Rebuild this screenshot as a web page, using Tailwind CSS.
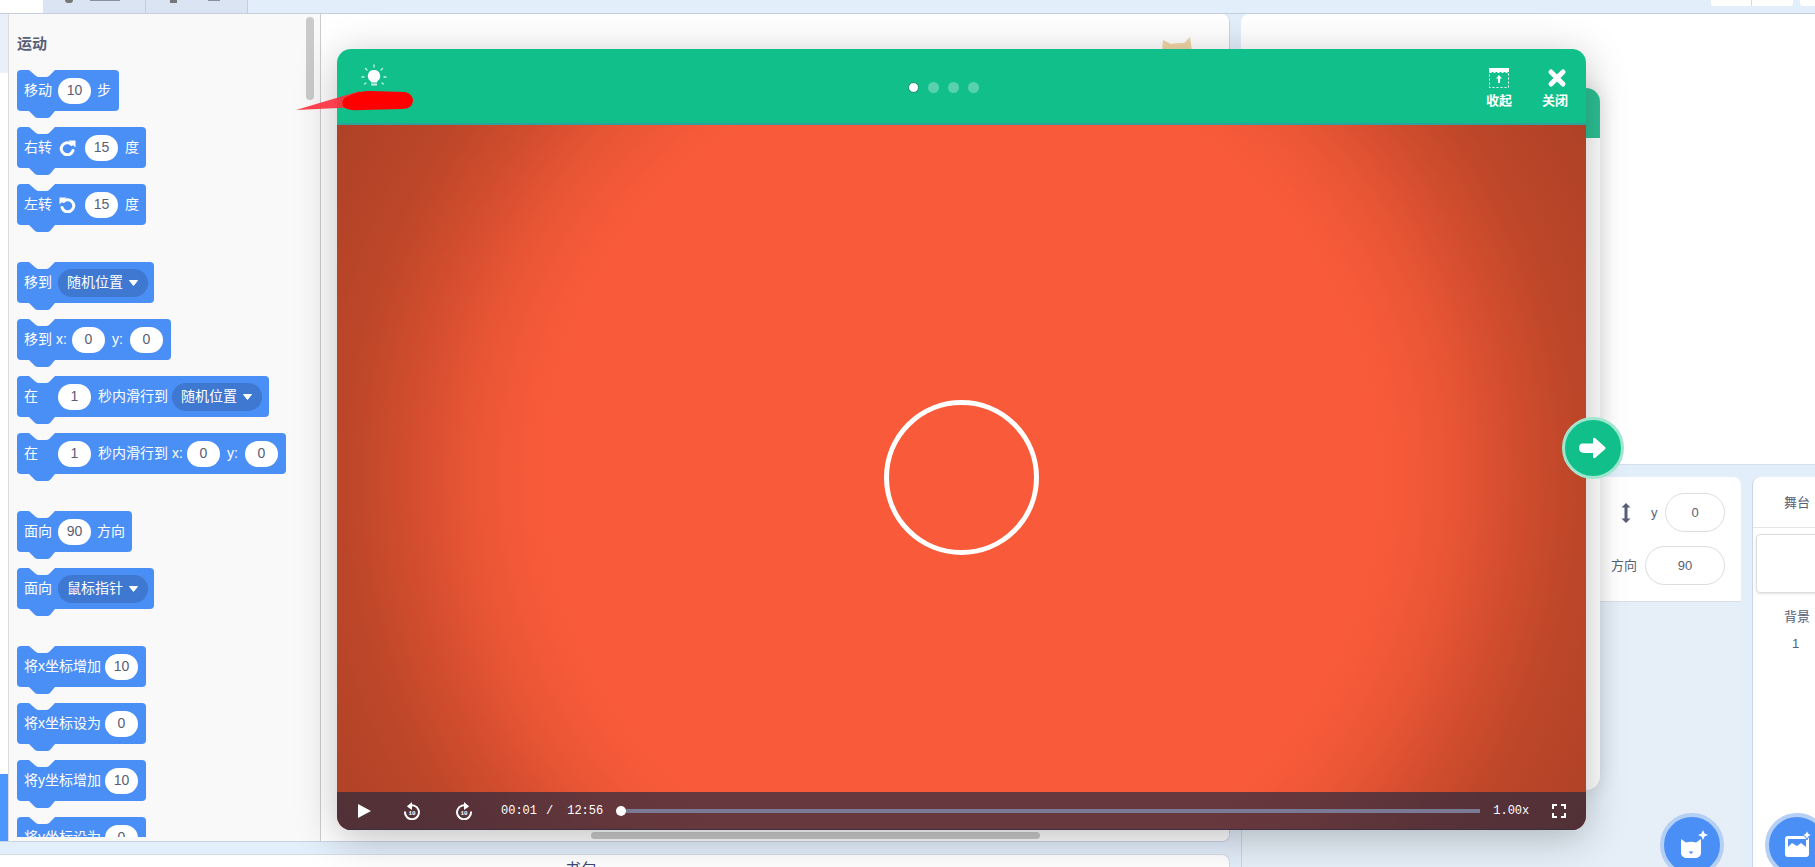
<!DOCTYPE html>
<html lang="en">
<head>
    <meta charset="UTF-8">
    <title>Scratch</title>
    <script src="https://cdn.jsdelivr.net/npm/@tailwindcss/browser@4"></script>
</head>
<body class="relative h-[867px] overflow-hidden bg-[#e3eefb] font-['Liberation_Sans','Noto_Sans_CJK_SC',sans-serif] text-[#575e75]">
    <!-- shared block notches and turn icon -->
    <svg class="hidden">
        <symbol id="notchTop" viewBox="0 0 26 7"><path d="M0 0 L7 6 Q8 7 10 7 H17 Q19 7 20 6 L26 0 Z" fill="#f9f9f9"/></symbol>
        <symbol id="notchBottom" viewBox="0 0 26 7"><path d="M0 0 L6 6 Q7 7 9 7 H18 Q20 7 21 6 L26 0 Z" fill="#4a8ff5"/></symbol>
        <symbol id="turn" viewBox="0 0 17 17"><path d="M12.500 5.500A6 6 0 1 0 14 11.500" fill="none" stroke="white" stroke-width="3" stroke-linecap="round"/><path d="M9.500 1.500h7V8.500z" fill="white"/></symbol>
    </svg>

    <!-- top bar -->
    <div class="flex h-[14px] justify-between overflow-hidden border-b border-[#c5cedb]">
        <div class="flex">
            <div class="w-[43px] bg-white"></div>
            <div class="flex h-[13px] w-[103px] items-start border-r border-[#c5cedb] bg-[#dbe4f3] pl-[22px]">
                <span class="h-[3px] w-[8px] rounded-b-full bg-[#777]"></span>
                <span class="ml-[17px] h-[1px] w-[30px] bg-[#8a8f9c]"></span>
            </div>
            <div class="flex h-[13px] w-[102px] items-start border-r border-[#c5cedb] bg-[#dbe4f3] pl-[24px]">
                <span class="h-[3px] w-[7px] bg-[#777]"></span>
                <span class="ml-[31px] h-[1px] w-[12px] bg-[#8a8f9c]"></span>
            </div>
        </div>
        <div class="flex h-[6px]">
            <div class="h-[6px] w-[41px] rounded-bl-[3px] border-r border-[#d5dbe5] bg-white"></div>
            <div class="h-[6px] w-[41px] rounded-br-[3px] bg-white"></div>
            <div class="ml-[7px] h-[6px] w-[15px] rounded-bl-[3px] bg-white"></div>
        </div>
    </div>

    <div class="flex h-[853px]">
        <!-- left column -->
        <div class="flex w-[1230px] shrink-0 flex-col">
            <div class="flex h-[828px] shrink-0 overflow-hidden rounded-tr-[8px] rounded-br-[8px] border-r border-b border-[#c9d3e4] bg-white">
                <!-- category strip -->
                <div class="flex w-[9px] shrink-0 flex-col justify-between border-r border-[#ddd] bg-white">
                    <div class="h-[59px] bg-[#e9f0fa]"></div>
                    <div class="h-[67px] bg-[#4c97ff]"></div>
                </div>
                <!-- block palette -->
                <div class="relative w-[311px] shrink-0 overflow-hidden bg-[#f9f9f9] pl-[8px] pt-[20px]">
                    <div class="mb-[17px] text-[15px] leading-[19px] font-bold">运动</div>

                    <div class="relative mb-[16px] flex h-[41px] w-[102px] items-center gap-[6px] rounded-[4px] bg-[#4a8ff5] pl-[7px] text-[14px] text-white">
                        <svg class="absolute left-[12px] top-0 h-[7px] w-[26px]"><use href="#notchTop"/></svg>
                        <svg class="absolute left-[12px] top-[41px] h-[7px] w-[26px]"><use href="#notchBottom"/></svg>
                        <span>移动</span><span class="flex h-[26px] w-[33px] items-center justify-center rounded-full bg-white text-[#575e75]">10</span><span>步</span>
                    </div>
                    <div class="relative mb-[16px] flex h-[41px] w-[129px] items-center rounded-[4px] bg-[#4a8ff5] pl-[7px] text-[14px] text-white">
                        <svg class="absolute left-[12px] top-0 h-[7px] w-[26px]"><use href="#notchTop"/></svg>
                        <svg class="absolute left-[12px] top-[41px] h-[7px] w-[26px]"><use href="#notchBottom"/></svg>
                        <span>右转</span>
                        <svg class="ml-[7px] mr-[9px] size-[17px]"><use href="#turn"/></svg>
                        <span class="flex h-[26px] w-[33px] items-center justify-center rounded-full bg-white text-[#575e75]">15</span><span class="ml-[7px]">度</span>
                    </div>
                    <div class="relative mb-[37px] flex h-[41px] w-[129px] items-center rounded-[4px] bg-[#4a8ff5] pl-[7px] text-[14px] text-white">
                        <svg class="absolute left-[12px] top-0 h-[7px] w-[26px]"><use href="#notchTop"/></svg>
                        <svg class="absolute left-[12px] top-[41px] h-[7px] w-[26px]"><use href="#notchBottom"/></svg>
                        <span>左转</span>
                        <svg class="ml-[7px] mr-[9px] size-[17px] -scale-x-100"><use href="#turn"/></svg>
                        <span class="flex h-[26px] w-[33px] items-center justify-center rounded-full bg-white text-[#575e75]">15</span><span class="ml-[7px]">度</span>
                    </div>

                    <div class="relative mb-[16px] flex h-[41px] w-[137px] items-center gap-[6px] rounded-[4px] bg-[#4a8ff5] pl-[7px] text-[14px] text-white">
                        <svg class="absolute left-[12px] top-0 h-[7px] w-[26px]"><use href="#notchTop"/></svg>
                        <svg class="absolute left-[12px] top-[41px] h-[7px] w-[26px]"><use href="#notchBottom"/></svg>
                        <span>移到</span>
                        <span class="flex h-[28px] w-[90px] items-center rounded-full bg-[#3e78d0] pl-[9px]">随机位置<svg class="ml-[6px] h-[6px] w-[9px]" viewBox="0 0 9 6"><path d="M0.500 0.500h8L4.500 5.500z" fill="white" stroke="white" stroke-linejoin="round"/></svg></span>
                    </div>
                    <div class="relative mb-[16px] flex h-[41px] w-[154px] items-center rounded-[4px] bg-[#4a8ff5] pl-[7px] text-[14px] text-white">
                        <svg class="absolute left-[12px] top-0 h-[7px] w-[26px]"><use href="#notchTop"/></svg>
                        <svg class="absolute left-[12px] top-[41px] h-[7px] w-[26px]"><use href="#notchBottom"/></svg>
                        <span class="w-[48px]">移到 x:</span><span class="flex h-[26px] w-[33px] items-center justify-center rounded-full bg-white text-[#575e75]">0</span><span class="ml-[7px] w-[18px]">y:</span><span class="flex h-[26px] w-[33px] items-center justify-center rounded-full bg-white text-[#575e75]">0</span>
                    </div>
                    <div class="relative mb-[16px] flex h-[41px] w-[252px] items-center rounded-[4px] bg-[#4a8ff5] pl-[7px] text-[14px] text-white">
                        <svg class="absolute left-[12px] top-0 h-[7px] w-[26px]"><use href="#notchTop"/></svg>
                        <svg class="absolute left-[12px] top-[41px] h-[7px] w-[26px]"><use href="#notchBottom"/></svg>
                        <span class="w-[34px]">在</span><span class="flex h-[26px] w-[33px] items-center justify-center rounded-full bg-white text-[#575e75]">1</span><span class="ml-[7px] w-[74px]">秒内滑行到</span>
                        <span class="flex h-[28px] w-[90px] items-center rounded-full bg-[#3e78d0] pl-[9px]">随机位置<svg class="ml-[6px] h-[6px] w-[9px]" viewBox="0 0 9 6"><path d="M0.500 0.500h8L4.500 5.500z" fill="white" stroke="white" stroke-linejoin="round"/></svg></span>
                    </div>
                    <div class="relative mb-[37px] flex h-[41px] w-[269px] items-center rounded-[4px] bg-[#4a8ff5] pl-[7px] text-[14px] text-white">
                        <svg class="absolute left-[12px] top-0 h-[7px] w-[26px]"><use href="#notchTop"/></svg>
                        <svg class="absolute left-[12px] top-[41px] h-[7px] w-[26px]"><use href="#notchBottom"/></svg>
                        <span class="w-[34px]">在</span><span class="flex h-[26px] w-[33px] items-center justify-center rounded-full bg-white text-[#575e75]">1</span><span class="ml-[7px] w-[89px] whitespace-nowrap">秒内滑行到 x:</span><span class="flex h-[26px] w-[33px] items-center justify-center rounded-full bg-white text-[#575e75]">0</span><span class="ml-[7px] w-[18px]">y:</span><span class="flex h-[26px] w-[33px] items-center justify-center rounded-full bg-white text-[#575e75]">0</span>
                    </div>

                    <div class="relative mb-[16px] flex h-[41px] w-[115px] items-center gap-[6px] rounded-[4px] bg-[#4a8ff5] pl-[7px] text-[14px] text-white">
                        <svg class="absolute left-[12px] top-0 h-[7px] w-[26px]"><use href="#notchTop"/></svg>
                        <svg class="absolute left-[12px] top-[41px] h-[7px] w-[26px]"><use href="#notchBottom"/></svg>
                        <span>面向</span><span class="flex h-[26px] w-[33px] items-center justify-center rounded-full bg-white text-[#575e75]">90</span><span>方向</span>
                    </div>
                    <div class="relative mb-[37px] flex h-[41px] w-[137px] items-center gap-[6px] rounded-[4px] bg-[#4a8ff5] pl-[7px] text-[14px] text-white">
                        <svg class="absolute left-[12px] top-0 h-[7px] w-[26px]"><use href="#notchTop"/></svg>
                        <svg class="absolute left-[12px] top-[41px] h-[7px] w-[26px]"><use href="#notchBottom"/></svg>
                        <span>面向</span>
                        <span class="flex h-[28px] w-[90px] items-center rounded-full bg-[#3e78d0] pl-[9px]">鼠标指针<svg class="ml-[6px] h-[6px] w-[9px]" viewBox="0 0 9 6"><path d="M0.500 0.500h8L4.500 5.500z" fill="white" stroke="white" stroke-linejoin="round"/></svg></span>
                    </div>

                    <div class="relative mb-[16px] flex h-[41px] w-[129px] items-center gap-[6px] rounded-[4px] bg-[#4a8ff5] pl-[7px] text-[14px] text-white">
                        <svg class="absolute left-[12px] top-0 h-[7px] w-[26px]"><use href="#notchTop"/></svg>
                        <svg class="absolute left-[12px] top-[41px] h-[7px] w-[26px]"><use href="#notchBottom"/></svg>
                        <span class="w-[75px] whitespace-nowrap">将x坐标增加</span><span class="flex h-[26px] w-[33px] items-center justify-center rounded-full bg-white text-[#575e75]">10</span>
                    </div>
                    <div class="relative mb-[16px] flex h-[41px] w-[129px] items-center gap-[6px] rounded-[4px] bg-[#4a8ff5] pl-[7px] text-[14px] text-white">
                        <svg class="absolute left-[12px] top-0 h-[7px] w-[26px]"><use href="#notchTop"/></svg>
                        <svg class="absolute left-[12px] top-[41px] h-[7px] w-[26px]"><use href="#notchBottom"/></svg>
                        <span class="w-[75px] whitespace-nowrap">将x坐标设为</span><span class="flex h-[26px] w-[33px] items-center justify-center rounded-full bg-white text-[#575e75]">0</span>
                    </div>
                    <div class="relative mb-[16px] flex h-[41px] w-[129px] items-center gap-[6px] rounded-[4px] bg-[#4a8ff5] pl-[7px] text-[14px] text-white">
                        <svg class="absolute left-[12px] top-0 h-[7px] w-[26px]"><use href="#notchTop"/></svg>
                        <svg class="absolute left-[12px] top-[41px] h-[7px] w-[26px]"><use href="#notchBottom"/></svg>
                        <span class="w-[75px] whitespace-nowrap">将y坐标增加</span><span class="flex h-[26px] w-[33px] items-center justify-center rounded-full bg-white text-[#575e75]">10</span>
                    </div>
                    <div class="relative flex h-[41px] w-[129px] items-center gap-[6px] rounded-[4px] bg-[#4a8ff5] pl-[7px] text-[14px] text-white">
                        <svg class="absolute left-[12px] top-0 h-[7px] w-[26px]"><use href="#notchTop"/></svg>
                        <span class="w-[75px] whitespace-nowrap">将y坐标设为</span><span class="flex h-[26px] w-[33px] items-center justify-center rounded-full bg-white text-[#575e75]">0</span>
                    </div>

                    <!-- palette scrollbar and bottom strip -->
                    <div class="absolute left-[297px] top-[3px] h-[83px] w-[8px] rounded-full bg-[#cacaca]"></div>
                    <div class="absolute bottom-0 left-0 h-[4px] w-full bg-[#f9f9f9]"></div>
                </div>
                <!-- workspace -->
                <div class="relative flex-1 border-l border-[#ccc] bg-white">
                    <svg class="absolute left-[841px] top-[23px] h-[14px] w-[30px]" viewBox="0 0 30 14"><path d="M1 3l8 4c4-1 8-1 13-1l6-6 2 14H0z" fill="#f0d5a5"/></svg>
                    <div class="absolute bottom-[2px] left-[270px] h-[7px] w-[449px] rounded-full bg-[#cacaca]"></div>
                </div>
            </div>
            <!-- backpack -->
            <div class="mt-[12px] min-h-0 flex-1 overflow-hidden rounded-tr-[8px] border-t border-r border-[#d5dce8] bg-white pl-[565px] pt-[3px] text-[16px] leading-[24px] text-[#3d4a78]">书包</div>
        </div>

        <!-- right column -->
        <div class="ml-[11px] flex min-w-0 flex-1 flex-col">
            <div class="h-[451px] shrink-0 rounded-tl-[8px] border-b border-[#d5dfee] bg-white"></div>
            <div class="mt-[12px] flex min-h-0 flex-1">
                <!-- sprite pane -->
                <div class="relative w-[500px] shrink-0 overflow-hidden rounded-t-[8px] border-l border-[#c9d5e8] bg-[#e6eff8]">
                    <div class="h-[125px] border-b border-[#d5dfee] bg-white pl-[369px] pt-[16px] text-[13px] text-[#575e75]">
                        <div class="flex h-[39px] items-center">
                            <svg class="mr-[20px] ml-[10px] h-[20px] w-[10px]" viewBox="0 0 10 20" fill="#575e75"><path d="M5 0l4.500 4.500H6.500v11H9.500L5 20 .5 15.500H3.500v-11H.5z"/></svg>
                            <span class="w-[14px]">y</span>
                            <span class="flex h-[39px] w-[60px] items-center justify-center rounded-[20px] border border-[#ddd]">0</span>
                        </div>
                        <div class="mt-[14px] flex h-[39px] items-center">
                            <span class="w-[34px] whitespace-nowrap">方向</span>
                            <span class="flex h-[39px] w-[80px] items-center justify-center rounded-[20px] border border-[#ddd]">90</span>
                        </div>
                    </div>
                    <div class="absolute left-[418px] top-[336px] flex size-[64px] items-center justify-center rounded-full border-[4px] border-[#b5cff5] bg-[#4a8ff5]">
                        <svg class="size-[34px]" viewBox="0 0 34 34" fill="white"><path d="M6 11l5 3.500c3-1 7-1 10 0l5-3.500v14c0 3-3 5-6 5h-8c-3 0-6-2-6-5z"/><path d="M13.500 23.500h5l-2.500 2.500z" fill="#4a8ff5"/><path d="M28 2l1.500 3.500L33 7l-3.500 1.500L28 12l-1.500-3.500L23 7l3.500-1.500z"/></svg>
                    </div>
                </div>
                <!-- stage selector -->
                <div class="relative ml-[11px] min-w-0 flex-1 overflow-hidden rounded-tl-[8px] border-l border-[#c9d5e8] bg-white text-[13px]">
                    <div class="h-[51px] border-b border-[#e5e5e5] pl-[31px] pt-[16px]">舞台</div>
                    <div class="ml-[3px] mt-[6px] h-[59px] w-[70px] rounded-[4px] border border-[#ddd] shadow-sm"></div>
                    <div class="pl-[31px] pt-[14px]">背景</div>
                    <div class="pl-[39px] pt-[7px]">1</div>
                    <div class="absolute left-[12px] top-[336px] flex size-[64px] items-center justify-center rounded-full border-[4px] border-[#b5cff5] bg-[#4a8ff5]">
                        <svg class="size-[34px]" viewBox="0 0 34 34"><rect x="5" y="8" width="24" height="21" rx="3" fill="white"/><path d="M8 11h18v8l-5-4-4 3-5-3-4 4z" fill="#4a8ff5"/><path d="M27 2l1.500 3.500L32 7l-3.500 1.500L27 12l-1.500-3.500L22 7l3.500-1.500z" fill="white" stroke="#4a8ff5"/></svg>
                    </div>
                </div>
            </div>
        </div>
    </div>

    <!-- modal behind the video window -->
    <div class="absolute left-[1500px] top-[88px] h-[702px] w-[100px] overflow-hidden rounded-[14px] bg-white shadow-[0_0_20px_rgba(0,0,0,0.12)]">
        <div class="h-[50px] bg-[#2dc195]"></div>
    </div>

    <!-- video window -->
    <div class="absolute left-[337px] top-[49px] h-[781px] w-[1249px] rounded-[14px] shadow-[0_8px_40px_rgba(0,0,0,0.25)]">
        <div class="flex h-[76px] justify-between rounded-t-[14px] border-b-[2px] border-[#2ba39a] bg-[#11bf8a]">
            <div class="w-[64px] pl-[24px] pt-[15px]">
                <svg class="size-[26px]" viewBox="0 0 26 26"><path d="M13 6a6 6 0 0 0-3.500 11c.5.4.5 1 .5 1.500h6c0-.5 0-1.100.5-1.500A6 6 0 0 0 13 6z" fill="white"/><rect x="10" y="19.500" width="6" height="2" fill="#c5f2e3"/><g stroke="#c5f2e3" stroke-width="1.300" stroke-linecap="round"><path d="M13 1v2M4.500 4.500 6 6M21.500 4.500 20 6M1 13h2M23 13h2M3.500 20l1.500-1M22.500 20 21 19"/></g></svg>
            </div>
            <div class="flex items-center gap-[9px] pt-[2px]">
                <span class="size-[11px] rounded-full border border-[#0d8a6a] bg-white"></span>
                <span class="size-[11px] rounded-full bg-white/30"></span>
                <span class="size-[11px] rounded-full bg-white/30"></span>
                <span class="size-[11px] rounded-full bg-white/30"></span>
            </div>
            <div class="flex gap-[30px] pr-[18px] pt-[28px] text-[13px] leading-[15px] font-bold text-white">
                <div class="flex flex-col items-center">
                    <svg class="mb-[5px] mt-[-9px] h-[20px] w-[20px]" viewBox="0 0 20 20" fill="none"><rect x="0" y="0" width="20" height="4" fill="white"/><rect x="0.500" y="4.500" width="19" height="15" stroke="white" stroke-dasharray="2 2"/><path d="M10 7l3 3.500h-2V15H9v-4.500H7z" fill="white"/></svg>
                    <span>收起</span>
                </div>
                <div class="flex flex-col items-center">
                    <svg class="mb-[5px] mt-[-9px] ml-[4px] size-[20px]" viewBox="0 0 20 20"><path d="M4 4l12 12M16 4L4 16" stroke="white" stroke-width="5" stroke-linecap="round"/></svg>
                    <span>关闭</span>
                </div>
            </div>
        </div>
        <div class="relative flex h-[705px] items-center justify-center overflow-hidden rounded-b-[14px] bg-[radial-gradient(circle_at_center,#f95b3a_0,#f95b3a_58%,#ea5635_68%,#d24d2e_77%,#bd4629_86%,#ae4226_100%)]">
            <div class="size-[155px] rounded-full border-[5px] border-white"></div>
            <!-- player controls -->
            <div class="absolute bottom-0 left-0 flex h-[38px] w-full items-center border-b border-[#3c3040] bg-[#2a2a3e]/70 font-['Liberation_Mono',monospace] text-[12px] text-white">
                <svg class="ml-[20px] size-[14px]" viewBox="0 0 14 14"><path d="M1 0l13 7-13 7z" fill="white"/></svg>
                <svg class="ml-[32px] size-[18px]" viewBox="0 0 18 18" fill="none"><path d="M5 4.500A7 7 0 1 1 2 9.500" stroke="white" stroke-width="2"/><path d="M9 0v8L4 4.500z" fill="white"/><text x="9" y="12.500" font-size="6" font-weight="bold" text-anchor="middle" fill="white">10</text></svg>
                <svg class="ml-[34px] size-[18px]" viewBox="0 0 18 18" fill="none"><path d="M13 4.500A7 7 0 1 0 16 9.500" stroke="white" stroke-width="2"/><path d="M9 0v8l5-3.500z" fill="white"/><text x="9" y="12.500" font-size="6" font-weight="bold" text-anchor="middle" fill="white">10</text></svg>
                <span class="ml-[28px]">00:01</span>
                <span class="ml-[9px]">/</span>
                <span class="ml-[14px]">12:56</span>
                <span class="ml-[13px] size-[10px] shrink-0 rounded-full bg-white"></span>
                <div class="h-[4px] w-[854px] bg-[#7b7a96]"></div>
                <span class="ml-[13px]">1.00x</span>
                <svg class="ml-[23px] size-[14px]" viewBox="0 0 14 14" fill="none"><path d="M1 5V1h4M9 1h4v4M13 9v4H9M5 13H1V9" stroke="white" stroke-width="2"/></svg>
            </div>
        </div>
    </div>

    <!-- next arrow -->
    <div class="absolute left-[1562px] top-[417px] flex size-[62px] items-center justify-center rounded-full border-[3px] border-[#9fe6cf] bg-[#11bf8a]">
        <svg class="h-[22px] w-[28px]" viewBox="0 0 28 22"><path d="M4 6.500h10V2c0-1 1-1.500 2-1l10 9c.8.700.8 1.500 0 2.200L16 21c-1 .5-2 0-2-1v-4H6C2 16 0 14 0 11.500 0 8.500 1 6.500 4 6.500z" fill="white"/></svg>
    </div>

    <!-- red annotation over the lesson title -->
    <svg class="absolute left-[290px] top-[85px] h-[35px] w-[130px]" viewBox="0 0 130 35">
        <path d="M6 25 L70 6 L70 22 Z" fill="#ff2d3c" fill-opacity="0.9"/>
        <path d="M56 12 Q70 5 80 6 L115 7 Q123 9 123 16 Q122 24 112 24 L72 25 Q55 26 53 21 Q51 15 56 12Z" fill="#ff0000"/>
    </svg>
</body>
</html>
